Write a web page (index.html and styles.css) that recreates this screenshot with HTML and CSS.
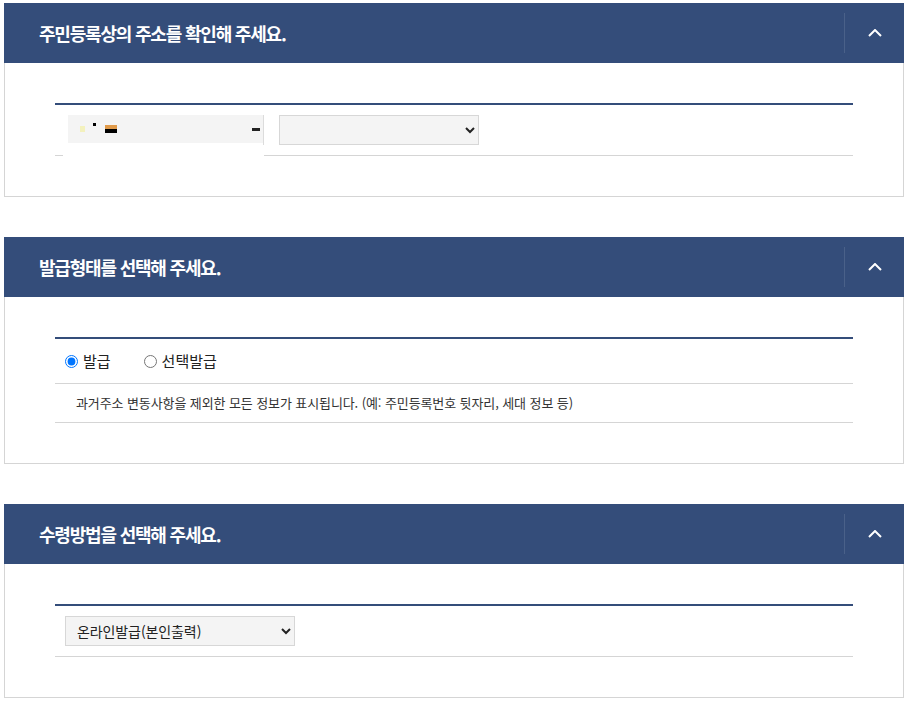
FILE: index.html
```html
<!DOCTYPE html>
<html lang="ko">
<head>
<meta charset="utf-8">
<title>주민등록표 발급</title>
<link rel="stylesheet" href="styles.css">
</head>
<body>
<div class="page">
  <section class="panel">
    <div class="panel-head">
      <h2 class="panel-title">주민등록상의 주소를 확인해 주세요.</h2>
      <button class="toggle" type="button" aria-label="접기">
        <svg width="14" height="8" viewBox="0 0 14 8"><polyline points="1,7 7,1 13,7" fill="none" stroke="#fff" stroke-width="2"/></svg>
      </button>
    </div>
    <div class="panel-body">
      <div class="form-table">
        <div class="row row-addr">
          <div class="addr-cell">
            <div class="masked">
              <span class="px px-a"></span><span class="px px-b"></span><span class="px px-c"></span>
              <span class="dash"></span>
            </div>
            <span class="sep"></span>
          </div>
          <select class="select select-addr">
            <option></option>
          </select>
        </div>
      </div>
    </div>
  </section>

  <section class="panel">
    <div class="panel-head">
      <h2 class="panel-title">발급형태를 선택해 주세요.</h2>
      <button class="toggle" type="button" aria-label="접기">
        <svg width="14" height="8" viewBox="0 0 14 8"><polyline points="1,7 7,1 13,7" fill="none" stroke="#fff" stroke-width="2"/></svg>
      </button>
    </div>
    <div class="panel-body">
      <div class="form-table">
        <div class="row row-radio">
          <label class="radio-item"><input type="radio" name="type" checked><span class="radio-text">발급</span></label>
          <label class="radio-item"><input type="radio" name="type"><span class="radio-text">선택발급</span></label>
        </div>
        <div class="row row-desc">과거주소 변동사항을 제외한 모든 정보가 표시됩니다. (예: 주민등록번호 뒷자리, 세대 정보 등)</div>
      </div>
    </div>
  </section>

  <section class="panel">
    <div class="panel-head">
      <h2 class="panel-title">수령방법을 선택해 주세요.</h2>
      <button class="toggle" type="button" aria-label="접기">
        <svg width="14" height="8" viewBox="0 0 14 8"><polyline points="1,7 7,1 13,7" fill="none" stroke="#fff" stroke-width="2"/></svg>
      </button>
    </div>
    <div class="panel-body">
      <div class="form-table">
        <div class="row row-select">
          <select class="select select-receive">
            <option>온라인발급(본인출력)</option>
          </select>
        </div>
      </div>
    </div>
  </section>
</div>
</body>
</html>
```

FILE: styles.css
```css
* { box-sizing: border-box; }

html, body {
  margin: 0;
  padding: 0;
  background: #fff;
}

body {
  font-family: "Noto Sans CJK KR", "Noto Sans", sans-serif;
  color: #222;
}

.page {
  padding: 3px 4px;
  display: flex;
  flex-direction: column;
  gap: 40px;
}

.panel {
  width: 900px;
}

.panel-head {
  height: 60px;
  background: #344d7a;
  display: flex;
  align-items: center;
  justify-content: space-between;
}

.panel-title {
  margin: 0;
  padding-left: 35px;
  font-size: 18px;
  font-weight: 700;
  letter-spacing: -1.2px;
  color: #fff;
  line-height: 60px;
}

.toggle {
  width: 60px;
  height: 40px;
  border: 0;
  border-left: 1px solid #4a6189;
  background: transparent;
  padding: 0;
  display: flex;
  align-items: center;
  justify-content: center;
  cursor: pointer;
}

.panel-body {
  border: 1px solid #d5d5d5;
  border-top: 0;
  padding: 40px 50px;
}

.form-table {
  border-top: 2px solid #344d7a;
}

.row {
  border-bottom: 1px solid #d5d5d5;
}

.row-addr {
  display: flex;
  align-items: flex-start;
  padding: 0 0 0 8px;
  height: 51px;
}

.addr-cell {
  align-self: stretch;
  margin-bottom: -1px;
  background: #fff;
  padding: 10px 0 0 5px;
  display: flex;
  align-items: flex-start;
}

.masked {
  width: 195px;
  height: 28px;
  background: #f4f4f4;
  display: flex;
  align-items: center;
  padding-left: 12px;
}

.px {
  display: inline-block;
  height: 6px;
}
.px-a { width: 5px; background: #f3f1bd; margin-right: 8px; }
.px-b { width: 3px; height: 3px; background: #000; margin-right: 9px; align-self: flex-start; margin-top: 8px; }
.px-c { width: 12px; height: 8px; background: linear-gradient(#e09a4a 0 50%, #000 50% 100%); }

.dash {
  margin-left: auto;
  margin-right: 3px;
  width: 8px;
  height: 3px;
  background: #222;
}

.sep {
  width: 1px;
  height: 30px;
  background: #dcdcdc;
}

.select {
  height: 30px;
  border: 1px solid #d7d7d7;
  background: #f4f4f4;
  font-family: "Noto Sans CJK KR", "Noto Sans", sans-serif;
  font-size: 14px;
  color: #222;
  padding: 0 6px 0 7px;
  border-radius: 0;
}

.select-addr {
  margin-top: 10px;
  margin-left: 15px;
  width: 200px;
}

.row-radio {
  display: flex;
  align-items: center;
  padding: 12px 0 12px 5px;
  height: 45px;
}

.radio-item {
  display: inline-flex;
  align-items: center;
  margin-right: 28px;
  font-size: 15px;
  line-height: 20px;
  color: #222;
}

.radio-item input {
  margin: 0 3px 0 5px;
  width: 13px;
  height: 13px;
}

.radio-text {
  margin-left: 2px;
}

.row-desc {
  padding: 9px 0 9px 21px;
  font-size: 13px;
  line-height: 19px;
  letter-spacing: -0.1px;
  color: #333;
  height: 39px;
}

.row-select {
  padding: 10px 0 10px 10px;
  height: 51px;
}

.select-receive {
  width: 230px;
  display: block;
  letter-spacing: -0.1px;
}
```
